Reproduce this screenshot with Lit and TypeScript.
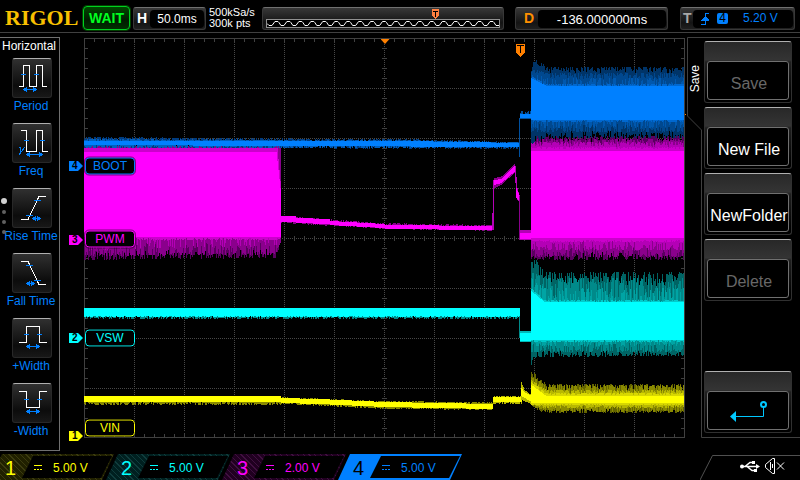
import { LitElement, html, svg, css } from "lit";
import { customElement, property } from "lit/decorators.js";
import { classMap } from "lit/directives/class-map.js";

/* ---------- trace geometry (plot units: 600 x 400, 50 per division) ---------- */

type Pt = [number, number];
interface Band {
  color: string;
  from: number;
  to: number;
  top: Pt[];
  bottom: Pt[];
  jitterTop?: number;
  jitterBottom?: number;
  skip?: number;
}

function makeRandom(seed: number) {
  let s = seed;
  return () => {
    s = (s * 1664525 + 1013904223) >>> 0;
    return s / 4294967296;
  };
}

function at(points: Pt[], x: number): number {
  if (x <= points[0][0]) return points[0][1];
  for (let i = 1; i < points.length; i++) {
    const [x1, y1] = points[i];
    const [x0, y0] = points[i - 1];
    if (x <= x1) return y0 + ((y1 - y0) * (x - x0)) / (x1 - x0 || 1);
  }
  return points[points.length - 1][1];
}

function bandPath(b: Band, seed: number): string {
  const rnd = makeRandom(seed);
  let d = "";
  for (let x = b.from; x < b.to; x++) {
    const a = rnd();
    const c = rnd();
    const k = rnd();
    if (b.skip && k < b.skip) continue;
    const y0 = Math.round(at(b.top, x) + (b.jitterTop ?? 0) * a * a);
    const y1 = Math.round(at(b.bottom, x) - (b.jitterBottom ?? 0) * c * c);
    if (y1 > y0) d += `M${x} ${y0}h1V${y1}h-1z`;
  }
  return d;
}

const flat = (y: number): Pt[] => [[0, y]];

const PINK: Band[] = [
  { color: "#5a0060", from: 0, to: 197, top: flat(190), bottom: [[0, 222], [191, 220], [196, 206]], jitterBottom: 10 },
  { color: "#8a008c", from: 0, to: 197, top: flat(108), bottom: [[0, 218], [191, 217], [196, 205]], jitterBottom: 13 },
  { color: "#b400b6", from: 0, to: 194, top: flat(110), bottom: [[0, 212], [194, 208]], jitterBottom: 14, skip: 0.5 },
  { color: "#cc00cc", from: 0, to: 197, top: [[0, 110], [193, 110], [197, 154]], bottom: flat(202), jitterBottom: 2 },
  { color: "#ff00ff", from: 0, to: 197, top: [[0, 114], [192, 114], [196, 150]], bottom: flat(199) },
  { color: "#8a008c", from: 197, to: 409, top: [[197, 178], [215, 179], [300, 185], [409, 187]], bottom: [[197, 185], [230, 187], [300, 191], [409, 193]], jitterTop: 2, jitterBottom: 2 },
  { color: "#ff00ff", from: 197, to: 409, top: [[197, 178], [211, 178], [212, 180], [245, 181], [246, 183], [300, 186], [301, 187], [409, 188]], bottom: [[197, 184], [211, 184], [212, 185], [245, 186], [246, 187], [300, 190], [301, 191], [409, 192]] },
  { color: "#b400b6", from: 408, to: 410, top: [[408, 175], [409, 142]], bottom: flat(192) },
  { color: "#8a008c", from: 410, to: 431, top: [[410, 140], [418, 138], [430, 126], [431, 128]], bottom: [[410, 150], [418, 146], [431, 134]] },
  { color: "#ff00ff", from: 410, to: 431, top: [[410, 142], [417, 141], [430, 128]], bottom: [[410, 147], [417, 145], [431, 133]] },
  { color: "#b400b6", from: 431, to: 436, top: [[431, 128], [433, 150], [435, 157]], bottom: [[431, 145], [433, 162], [435, 164]] },
  { color: "#ff00ff", from: 432, to: 436, top: [[432, 150], [435, 158]], bottom: [[432, 160], [435, 163]] },
  { color: "#8a008c", from: 435, to: 436, top: flat(158), bottom: flat(202) },
  { color: "#b400b6", from: 436, to: 447, top: flat(192), bottom: flat(202) },
  { color: "#ff00ff", from: 436, to: 447, top: flat(195), bottom: flat(201) },
  { color: "#5a0060", from: 447, to: 600, top: flat(98), bottom: flat(222), jitterTop: 6, jitterBottom: 8 },
  { color: "#8a008c", from: 447, to: 600, top: flat(101), bottom: flat(219), jitterTop: 6, jitterBottom: 10 },
  { color: "#b400b6", from: 447, to: 600, top: flat(104), bottom: flat(212), jitterTop: 5, jitterBottom: 10 },
  { color: "#cc00cc", from: 447, to: 600, top: flat(109), bottom: flat(204), jitterTop: 2, jitterBottom: 2 },
  { color: "#ff00ff", from: 447, to: 600, top: flat(113), bottom: flat(200) },
];

const CYAN: Band[] = [
  { color: "#008a8a", from: 0, to: 436, top: flat(270), bottom: flat(281), jitterBottom: 3 },
  { color: "#00ffff", from: 0, to: 436, top: flat(270), bottom: flat(279), jitterBottom: 1 },
  { color: "#008a8a", from: 435, to: 436, top: flat(278), bottom: flat(300) },
  { color: "#00b8b8", from: 436, to: 447, top: flat(293), bottom: flat(304) },
  { color: "#00ffff", from: 436, to: 447, top: flat(295), bottom: flat(303) },
  { color: "#006464", from: 447, to: 600, top: [[447, 220], [452, 222], [460, 234]], bottom: [[447, 327], [452, 319], [600, 318]], jitterTop: 14, jitterBottom: 6 },
  { color: "#008a8a", from: 447, to: 600, top: [[447, 232], [460, 240]], bottom: flat(314), jitterTop: 22, jitterBottom: 9 },
  { color: "#00a4a4", from: 447, to: 600, top: [[447, 240], [460, 250]], bottom: flat(308), jitterTop: 14, jitterBottom: 5, skip: 0.4 },
  { color: "#00cccc", from: 447, to: 600, top: [[447, 250], [460, 262]], bottom: flat(304), jitterTop: 2, jitterBottom: 2 },
  { color: "#00ffff", from: 447, to: 600, top: [[447, 253], [460, 264]], bottom: flat(302) },
];

const YELLOW: Band[] = [
  { color: "#8a8a00", from: 0, to: 197, top: flat(358), bottom: flat(367), jitterTop: 1, jitterBottom: 3 },
  { color: "#ffff00", from: 0, to: 197, top: flat(358), bottom: flat(364) },
  { color: "#8a8a00", from: 197, to: 409, top: [[197, 359], [300, 363], [409, 364]], bottom: [[197, 366], [300, 371], [409, 372]], jitterTop: 2, jitterBottom: 2 },
  { color: "#ffff00", from: 197, to: 409, top: [[197, 360], [235, 361], [300, 364], [409, 366]], bottom: [[197, 365], [235, 366], [300, 369], [409, 371]] },
  { color: "#b8b800", from: 409, to: 438, top: flat(358), bottom: flat(366), jitterTop: 1, jitterBottom: 2 },
  { color: "#ffff00", from: 409, to: 438, top: flat(359), bottom: flat(364) },
  { color: "#b8b800", from: 437, to: 447, top: [[437, 344], [440, 352], [447, 357]], bottom: [[437, 362], [447, 366]] },
  { color: "#ffff00", from: 437, to: 447, top: [[437, 350], [440, 354], [447, 358]], bottom: [[437, 358], [447, 364]] },
  { color: "#646400", from: 447, to: 600, top: [[447, 334], [452, 336], [462, 346]], bottom: [[447, 368], [458, 375]], jitterTop: 6, jitterBottom: 4 },
  { color: "#8a8a00", from: 447, to: 600, top: [[447, 338], [462, 347]], bottom: [[447, 367], [458, 374]], jitterTop: 9, jitterBottom: 7 },
  { color: "#b8b800", from: 447, to: 600, top: [[447, 342], [462, 352]], bottom: [[447, 366], [458, 370]], jitterTop: 4, jitterBottom: 3 },
  { color: "#d8d800", from: 447, to: 600, top: [[447, 344], [462, 355]], bottom: flat(367), jitterTop: 2, jitterBottom: 1 },
  { color: "#ffff00", from: 447, to: 600, top: [[447, 347], [462, 358]], bottom: flat(365) },
];

const BLUE: Band[] = [
  { color: "#003c80", from: 0, to: 436, top: [[0, 99], [320, 101], [436, 104]], bottom: [[0, 110], [436, 111]], jitterTop: 3, jitterBottom: 4 },
  { color: "#0060c0", from: 0, to: 436, top: [[0, 101], [320, 102], [436, 104]], bottom: flat(110), jitterTop: 2, jitterBottom: 3 },
  { color: "#0080ff", from: 0, to: 436, top: [[0, 103], [320, 103], [436, 105]], bottom: [[0, 107], [436, 109]] },
  { color: "#00509f", from: 435, to: 436, top: flat(80), bottom: flat(119) },
  { color: "#00509f", from: 436, to: 447, top: flat(73), bottom: flat(81), jitterTop: 4 },
  { color: "#0080ff", from: 436, to: 447, top: flat(76), bottom: flat(80) },
  { color: "#003468", from: 447, to: 600, top: [[447, 30], [449, 18], [452, 20], [462, 29]], bottom: [[447, 106], [462, 100], [600, 100]], jitterTop: 6, jitterBottom: 7 },
  { color: "#00488f", from: 447, to: 600, top: [[447, 30], [462, 35]], bottom: flat(94), jitterTop: 6, jitterBottom: 8 },
  { color: "#0058ae", from: 447, to: 600, top: [[447, 34], [462, 40]], bottom: flat(90), jitterTop: 8, jitterBottom: 8, skip: 0.4 },
  { color: "#0068d0", from: 447, to: 600, top: [[447, 38], [462, 46]], bottom: flat(84), jitterTop: 2, jitterBottom: 2 },
  { color: "#0080ff", from: 447, to: 600, top: [[447, 40], [462, 48]], bottom: flat(82) },
];

function gridPaths() {
  let dots = "";
  let ticks = "";
  for (let x = 50; x < 600; x += 50) dots += `M${x + 0.5} 6V394`;
  for (let y = 50; y < 400; y += 50) dots += `M6 ${y + 0.5}H594`;
  for (let x = 10; x < 600; x += 10) {
    const n = x % 50 === 0 ? 5 : 4;
    ticks += `M${x + 0.5} 0v${n}M${x + 0.5} 400v${-n}M${x + 0.5} 198v5`;
  }
  for (let y = 10; y < 400; y += 10) {
    const n = y % 50 === 0 ? 5 : 4;
    ticks += `M0 ${y + 0.5}h${n}M601 ${y + 0.5}h${-n}M298 ${y + 0.5}h5`;
  }
  return { dots, ticks };
}

/* ---------- oscilloscope plot ---------- */

@customElement("scope-plot")
class ScopePlot extends LitElement {
  static styles = css`
    :host { display: block; position: relative; flex: 1; min-width: 0; }
    .plot { display: block; width: 100%; height: 100%; }
    .tag, .name, .pin, .center, .level { position: absolute; box-sizing: border-box; }
    .tag {
      left: -15px; width: 14px; height: 10px; transform: translateY(-50%);
      clip-path: polygon(0 0, 9px 0, 100% 50%, 9px 100%, 0 100%);
      color: #000; font-size: 10px; line-height: 10px; font-weight: bold; padding-left: 3px;
    }
    .name {
      left: 1px; width: 50px; height: 17px; transform: translateY(-50%);
      border: 1px solid; border-radius: 4px; background: #000;
      outline: 1px solid rgb(0 0 0 / 50%);
      font-size: 12px; line-height: 15px; text-align: center;
    }
    .c1 { --ch: #ffff00; } .c2 { --ch: #00ffff; } .c3 { --ch: #ff00ff; } .c4 { --ch: #0080ff; }
    .tag { background: var(--ch); }
    .name { color: var(--ch); border-color: var(--ch); }
    .pin { top: 6px; left: 72%; width: 9px; height: 13px; margin-left: -1px; }
    .center { top: 1px; left: 50%; width: 9px; height: 5px; margin-left: -4px; background: #ff8000; clip-path: polygon(0 0, 100% 0, 50% 100%); }
    .level { right: -1px; top: 19%; width: 1px; height: 1px; background: #ff8000; }
  `;

  private channels = [
    { n: 4, name: "BOOT", label: 128, ground: 128 },
    { n: 3, name: "PWM", label: 201, ground: 202 },
    { n: 2, name: "VSW", label: 300, ground: 300 },
    { n: 1, name: "VIN", label: 390, ground: 398 },
  ];

  render() {
    const { dots, ticks } = gridPaths();
    const bands = [...PINK, ...CYAN, ...YELLOW, ...BLUE];
    return html`
      <svg class="plot" viewBox="0 0 601 400" preserveAspectRatio="none" shape-rendering="crispEdges">
        <path d=${dots} fill="none" stroke="#484848" stroke-dasharray="1 1" />
        <path d=${ticks} fill="none" stroke="#404040" />
        <path d="M.5 .5H600.5V399.5H.5z" fill="none" stroke="#404040" />
        ${bands.map((b, i) => svg`<path d=${bandPath(b, 97 + i * 131)} fill=${b.color} />`)}
      </svg>
      ${this.channels.map(
        (c) => html`
          <span class="tag c${c.n}" style="top:${c.ground / 4}%">${c.n}</span>
          <span class="name c${c.n}" style="top:${c.label / 4}%">${c.name}</span>
        `
      )}
      <span class="center"></span>
      <svg class="pin" viewBox="0 0 9 13" shape-rendering="crispEdges">
        <path d="M0 0H9V9L4.500 13L0 9z" fill="#ff8000" />
        <path d="M1 1.500H8M4.500 2V9" stroke="#000" fill="none" />
      </svg>
      <span class="level"></span>
    `;
  }
}

/* ---------- measurement key ---------- */

interface Glyph { wave: string; ticks: string; arrow: [number, number, number]; inverse?: boolean; }

const GLYPHS: Record<string, Glyph> = {
  Period: { wave: "M7 28.500H11.500V7.500H17.500V28.500H24.500V7.500H30.500V28.500H35", ticks: "M9 16.500h5M22 16.500h5", arrow: [11, 25, 31] },
  Freq: { wave: "M9 7.500H14.500V28.500H24.500V7.500H30.500V28.500H36", ticks: "M12 17.500h5M28 17.500h5", arrow: [14, 31, 31], inverse: true },
  "Rise Time": { wave: "M9 31.500H16L27 8.500H34", ticks: "M22 12.500h7M14 27.500h7", arrow: [20, 29, 30] },
  "Fall Time": { wave: "M9 8.500H16L27 31.500H34", ticks: "M14 12.500h7M22 27.500h7", arrow: [14, 23, 30] },
  "+Width": { wave: "M7 24.500H14.500V8.500H27.500V24.500H35", ticks: "M12 16.500h5M25 16.500h5", arrow: [14, 28, 28] },
  "-Width": { wave: "M7 8.500H14.500V24.500H27.500V8.500H35", ticks: "M12 16.500h5M25 16.500h5", arrow: [14, 28, 28] },
};

@customElement("measure-key")
class MeasureKey extends LitElement {
  @property() name = "";

  static styles = css`
    :host { display: block; height: 65px; }
    .key {
      display: flex; flex-direction: column; align-items: center; width: 100%;
      padding: 0; border: 0; background: none; color: #0080ff;
      font: 12px/16px "Liberation Sans", Arial, sans-serif; white-space: nowrap; cursor: pointer;
    }
    .icon {
      box-sizing: border-box; width: 40px; height: 40px; border-radius: 3px;
      border: 1px solid #282828; border-top-color: #b0b0b0;
      background: linear-gradient(#303030, #0c0c0c 70%, #181818);
    }
    .art { display: block; width: 40px; height: 40px; margin: -1px; }
    .text { padding-right: 2px; }
  `;

  render() {
    const g = GLYPHS[this.name];
    if (!g) return html``;
    const [a, b, row] = g.arrow;
    const y = row + 0.5;
    return html`
      <button class="key">
        <span class="icon">
          <svg class="art" viewBox="0 0 40 40" fill="none" shape-rendering="crispEdges">
            <path d=${g.wave} stroke="#fff" />
            <path d="${g.ticks}M${a} ${y}H${b}" stroke="#0080ff" />
            <path d="M${a} ${y}l4 -3v6zM${b} ${y}l-4 -3v6z" fill="#0080ff" />
            ${g.inverse
              ? svg`<path d="M7 24.500H8.500V29M13 24L7 32" stroke="#0080ff" />`
              : null}
          </svg>
        </span>
        <span class="text">${this.name}</span>
      </button>
    `;
  }
}

/* ---------- whole screen ---------- */

@customElement("app-root")
class AppRoot extends LitElement {
  static styles = css`
    :host {
      display: flex; flex-direction: column; min-height: 100vh; background: #000; color: #fff;
      font: 12px/14px "Liberation Sans", Arial, sans-serif; overflow: hidden;
    }
    * { box-sizing: border-box; }
    button { font: inherit; cursor: pointer; }

    .header { display: flex; align-items: center; height: 33px; padding: 4px 5px 0 0; border-bottom: 1px solid #404040; }
    .logo { width: 83px; padding-left: 5px; color: #f8c000; font: bold 22px/24px "Liberation Serif", serif; }
    .run {
      width: 47px; height: 24px; padding: 0; border: 1px solid #00d020; border-radius: 4px;
      background: linear-gradient(#004800, #001c00 60%, #003000); color: #00ff20;
      box-shadow: 0 0 0 1px #004000; font-size: 14px; font-weight: bold;
    }
    .box {
      display: flex; align-items: center; height: 23px; border: 1px solid #383838; border-top: 1px solid #707070;
      border-radius: 3px; background: linear-gradient(#383838, #141414 70%, #202020);
    }
    .box .value {
      flex: 1; align-self: stretch; margin: 2px 1px 1px 0; border-radius: 4px; background: #000;
      text-align: center; line-height: 19px;
    }
    .key { font-size: 14px; font-weight: bold; }
    .timebase { width: 73px; margin: 0 3px; }
    .timebase .key { width: 16px; padding-left: 3px; }
    .rate { width: 53px; white-space: nowrap; }
    .rate-line { display: block; height: 11px; line-height: 11px; font-size: 11px; }
    .memory { position: relative; flex: 1; align-items: flex-end; padding: 0 3px 1px; }
    .strip { display: block; width: 100%; height: 9px; border: 1px solid #909090; background: #000; }
    .pin { position: absolute; left: 70%; top: 1px; width: 9px; height: 10px; }
    .delay { width: 153px; margin: 0 12px 0 11px; font-size: 13px; }
    .delay .key { width: 22px; padding-left: 8px; color: #ff9000; }
    .trigger { width: 115px; color: #0080ff; }
    .trigger .key { width: 12px; padding-left: 2px; color: #a8a8a8; }
    .trigger .value { display: flex; align-items: center; padding-left: 8px; }
    .edge { width: 8px; height: 12px; }
    .source { width: 11px; margin: 0 15px 0 8px; border-radius: 2px; background: #0080ff; color: #000; line-height: 11px; }

    .main { display: flex; flex: 1; min-height: 0; }
    .measures {
      position: relative; width: 60px; margin: 4px 0 3px; padding: 1px 0 0 2px;
      border: solid #707070; border-width: 1px 1px 1px 0;
    }
    .title { margin: 0 0 5px; font: inherit; }
    .keys { display: block; margin-left: 2px; margin-right: -1px; }
    .dots { position: absolute; left: 0; top: 160px; display: flex; flex-direction: column; align-items: center; gap: 6px; width: 7px; }
    .dot { width: 4px; height: 4px; border-radius: 50%; background: #606060; }
    .dot.on { width: 6px; height: 6px; background: #d0d0d0; }
    .scope { display: flex; flex: 1; min-width: 0; padding: 5px 2px 16px 24px; }

    .side { display: flex; width: 113px; padding: 4px 0 16px; }
    .tab { position: relative; width: 17px; flex: none; }
    .outline { position: absolute; inset: 0; width: 113px; height: 100%; }
    .side-name { position: relative; margin: 28px 0 0 1px; writing-mode: vertical-rl; transform: rotate(180deg); font: 12px/14px "Liberation Sans", Arial, sans-serif; }
    .soft { display: flex; flex-direction: column; gap: 4px; flex: 1; padding: 4px 8px 5px 0; }
    .softkey {
      position: relative; height: 62px; padding: 19px 2px 2px; border: 1px solid #303030; border-top-color: #b0b0b0; border-radius: 3px;
      background: linear-gradient(#282828, #343434 18px, #202020 20px, #000 90%); color: #fff; font-size: 16px;
    }
    .softkey:disabled { color: #686868; }
    .face { display: flex; align-items: flex-end; justify-content: center; height: 39px; padding: 0 0 6px 2px; border: 1px solid #707070; border-radius: 3px; background: #000; line-height: 18px; }
    .back { margin-top: auto; }
    .back .face { align-items: center; padding: 0; }
    .return { width: 40px; height: 22px; }

    .footer { display: flex; justify-content: space-between; height: 26px; }
    .channels { display: flex; margin-left: -10px; }
    .channel {
      display: flex; align-items: center; width: 124px; height: 26px; margin-right: -8px; padding: 0 2px 0 0; border: 0;
      clip-path: polygon(12px 0, 100% 0, calc(100% - 12px) 100%, 0 100%);
      background: repeating-linear-gradient(45deg, var(--dark) 0 3px, var(--mid) 3px 4px); color: var(--ch);
    }
    .channel.on { background: var(--ch); }
    .num { width: 32px; padding: 2px 0 0 15px; font-size: 20px; text-align: left; }
    .channel.on .num { color: #000; }
    .scale {
      display: flex; align-items: center; width: 90px; height: 22px; padding-left: 12px; gap: 11px; background: #000;
      clip-path: polygon(11px 0, 100% 0, calc(100% - 11px) 100%, 0 100%);
    }
    .volts { padding-top: 1px; }
    .dc { width: 8px; height: 5px; }
    .c1 { --ch: #ffff00; --dark: #202000; --mid: #3c3c10; }
    .c2 { --ch: #00ffff; --dark: #002020; --mid: #103c3c; }
    .c3 { --ch: #ff00ff; --dark: #200020; --mid: #401040; }
    .c4 { --ch: #0080ff; --dark: #001020; --mid: #003060; }
    .status { display: block; width: 100px; height: 26px; }
  `;

  private measures = ["Period", "Freq", "Rise Time", "Fall Time", "+Width", "-Width"];
  private menu = [
    { label: "Save", off: true },
    { label: "New File", off: false },
    { label: "NewFolder", off: false },
    { label: "Delete", off: true },
  ];
  private channels = [
    { n: 1, volts: "5.00 V" },
    { n: 2, volts: "5.00 V" },
    { n: 3, volts: "2.00 V" },
    { n: 4, volts: "5.00 V" },
  ];

  private wave() {
    let d = "M0 3.500";
    for (let x = 0; x < 233; x += 12) d += `L${x + 2} 5.500H${x + 5}L${x + 8} 1.500H${x + 11}L${x + 12} 2.500`;
    return d;
  }

  render() {
    return html`
      <header class="header">
        <span class="logo">RIGOL</span>
        <button class="run">WAIT</button>
        <div class="box timebase"><span class="key">H</span><span class="value">50.0ms</span></div>
        <div class="rate"><span class="rate-line">500kSa/s</span><span class="rate-line">300k pts</span></div>
        <div class="box memory">
          <svg class="strip" viewBox="0 0 233 7" preserveAspectRatio="none">
            <path d=${this.wave()} fill="none" stroke="#fff" />
          </svg>
          <svg class="pin" viewBox="0 0 9 10" shape-rendering="crispEdges">
            <path d="M1 0H8V7L4.500 10L1 7z" fill="#ff8040" />
            <path d="M2 2.500H7M4.500 2V8" stroke="#000" fill="none" />
          </svg>
        </div>
        <div class="box delay"><span class="key">D</span><span class="value">-136.000000ms</span></div>
        <div class="box trigger">
          <span class="key">T</span>
          <span class="value">
            <svg class="edge" viewBox="0 0 8 12" shape-rendering="crispEdges">
              <path d="M0 11.500H4.500V.5H8" fill="none" stroke="#0080ff" />
              <path d="M0 8L4.500 3L9 8z" fill="#0080ff" />
            </svg>
            <span class="source">4</span>
            <span>5.20 V</span>
          </span>
        </div>
      </header>

      <main class="main">
        <nav class="measures">
          <h2 class="title">Horizontal</h2>
          <div class="keys">
            ${this.measures.map((m) => html`<measure-key name=${m}></measure-key>`)}
          </div>
          <div class="dots">
            ${[0, 1, 2, 3].map((i) => html`<span class=${classMap({ dot: true, on: i === 0 })}></span>`)}
          </div>
        </nav>

        <section class="scope"><scope-plot></scope-plot></section>

        <aside class="side">
          <div class="tab">
            <svg class="outline" viewBox="0 0 113 401" preserveAspectRatio="none">
              <path d="M113 .5H.5V79L14.500 93V400.500H113" fill="none" stroke="#404040" />
            </svg>
            <h2 class="side-name">Save</h2>
          </div>
          <div class="soft">
            ${this.menu.map(
              (m) => html`<button class="softkey" ?disabled=${m.off}><span class="face">${m.label}</span></button>`
            )}
            <button class="softkey back" aria-label="Back">
              <span class="face">
                <svg class="return" viewBox="0 0 40 22">
                  <path d="M35.500 7V16.500H7" fill="none" stroke="#00c8ff" />
                  <path d="M2 16.500L8 11V22z" fill="#00c8ff" />
                  <circle cx="35.500" cy="4.500" r="2.500" fill="none" stroke="#00c8ff" stroke-width="2" />
                </svg>
              </span>
            </button>
          </div>
        </aside>
      </main>

      <footer class="footer">
        <div class="channels">
          ${this.channels.map(
            (c) => html`
              <button class="channel c${c.n} ${c.n === 4 ? "on" : ""}">
                <span class="num">${c.n}</span>
                <span class="scale">
                  <svg class="dc" viewBox="0 0 8 5" shape-rendering="crispEdges">
                    <path d="M0 .5H8" stroke="currentColor" />
                    <path d="M0 4.500H8" stroke="currentColor" stroke-dasharray="2 1" />
                  </svg>
                  <span class="volts">${c.volts}</span>
                </span>
              </button>
            `
          )}
        </div>
        <svg class="status" viewBox="0 0 100 26" fill="none" stroke="#fff">
          <path d="M0 26L12.500 1.500H100" stroke="#505050" />
          <path d="M41 12.500H57M45 12.500L50 8.500H53M47 12.500L52 16.500H55" stroke-width="1.500" />
          <circle cx="42" cy="12.500" r="2" fill="#fff" stroke="none" />
          <path d="M56 10L60 12.500L56 15z" fill="#fff" stroke="none" />
          <path d="M52 7h3v3h-3zM54 15h3v3h-3z" fill="#fff" stroke="none" />
          <path d="M65.500 10.500L72.500 4.500H74.500V19.500H72.500L65.500 13.500z" />
          <path d="M70.500 8V16M72.500 10V14M77 8.500L84 15.500M84 8.500L77 15.500" />
        </svg>
      </footer>
    `;
  }
}
